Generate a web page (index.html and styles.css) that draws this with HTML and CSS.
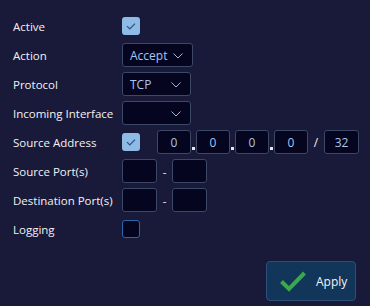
FILE: index.html
```html
<!DOCTYPE html>
<html lang="en">
<head>
  <meta charset="UTF-8">
  <title>Firewall Rule</title>
  <link rel="stylesheet" href="styles.css">
</head>
<body>
  <div class="panel">
    <div class="form">
      <label class="label">Active</label>
      <div class="field"><span class="check on"><svg viewBox="0 0 18 18" width="18" height="18"><path d="M5 9.2 L7.8 12 L13 6.6" fill="none" stroke="#2d4f80" stroke-width="1.2"/></svg></span></div>

      <label class="label">Action</label>
      <div class="field"><div class="select wide"><span>Accept</span><svg class="chev" viewBox="0 0 10 6" width="10" height="6"><path d="M0.5 0.5 L5 5 L9.5 0.5" fill="none" stroke="#9fb8d8" stroke-width="1"/></svg></div></div>

      <label class="label">Protocol</label>
      <div class="field"><div class="select"><span>TCP</span><svg class="chev" viewBox="0 0 10 6" width="10" height="6"><path d="M0.5 0.5 L5 5 L9.5 0.5" fill="none" stroke="#9fb8d8" stroke-width="1"/></svg></div></div>

      <label class="label">Incoming Interface</label>
      <div class="field"><div class="select"><span></span><svg class="chev" viewBox="0 0 10 6" width="10" height="6"><path d="M0.5 0.5 L5 5 L9.5 0.5" fill="none" stroke="#9fb8d8" stroke-width="1"/></svg></div></div>

      <label class="label">Source Address</label>
      <div class="field">
        <span class="check on"><svg viewBox="0 0 18 18" width="18" height="18"><path d="M5 9.2 L7.8 12 L13 6.6" fill="none" stroke="#2d4f80" stroke-width="1.2"/></svg></span>
        <div class="ip">
          <span class="box">0</span><span class="dot"></span>
          <span class="box">0</span><span class="dot"></span>
          <span class="box">0</span><span class="dot"></span>
          <span class="box">0</span>
          <span class="slash">/</span>
          <span class="box mask">32</span>
        </div>
      </div>

      <label class="label">Source Port(s)</label>
      <div class="field"><span class="box port"></span><span class="dash">-</span><span class="box port"></span></div>

      <label class="label">Destination Port(s)</label>
      <div class="field"><span class="box port"></span><span class="dash">-</span><span class="box port"></span></div>

      <label class="label">Logging</label>
      <div class="field"><span class="check off"></span></div>
    </div>

    <div class="actions">
      <button class="apply">
        <svg viewBox="0 0 28 22" width="28" height="22"><path d="M2.5 11.5 L10 19 L25.5 3" fill="none" stroke="#3aa94b" stroke-width="4"/></svg>
        <span>Apply</span>
      </button>
    </div>
  </div>
</body>
</html>
```

FILE: styles.css
```css
:root {
  --bg: #19193a;
  --input-bg: #05051f;
  --border: #3b4866;
  --text: #f2f2f2;
  --value: #a9c6ec;
  --check: #8dbbe6;
}

html, body {
  margin: 0;
  background: var(--bg);
}

body {
  font-family: 'Open Sans', 'Noto Sans', sans-serif;
  font-size: 11.5px;
  color: var(--text);
}

.panel {
  width: 370px;
  height: 306px;
  padding: 14px 14px 0 13px;
  box-sizing: border-box;
}

.form {
  display: grid;
  grid-template-columns: 109px auto;
  grid-auto-rows: 24px;
  row-gap: 5px;
}

.label {
  display: flex;
  align-items: center;
  white-space: nowrap;
}

.field {
  display: flex;
  align-items: center;
}

.check {
  width: 18px;
  height: 18px;
  box-sizing: border-box;
  border-radius: 3px;
  display: inline-flex;
}

.check.on {
  background: var(--check);
}

.check.off {
  background: var(--input-bg);
  border: 1px solid #2a68ad;
}

.select {
  width: 69px;
  height: 24px;
  box-sizing: border-box;
  border: 1px solid var(--border);
  border-radius: 3px;
  background: var(--input-bg);
  color: var(--value);
  display: flex;
  align-items: center;
  padding: 0 9px 0 7px;
  font-size: 12px;
}

.select.wide {
  width: 71px;
}

.select span {
  flex: 1;
}

.chev {
  margin-top: 1px;
}

.ip {
  display: flex;
  align-items: center;
  margin-left: 17px;
}

.box {
  width: 34px;
  height: 24px;
  box-sizing: border-box;
  border: 1px solid var(--border);
  border-radius: 3px;
  background: var(--input-bg);
  color: var(--value);
  display: inline-flex;
  align-items: center;
  justify-content: center;
  font-size: 12px;
}

.box.mask {
  width: 35px;
}

.box.port {
  width: 35px;
}

.dot {
  width: 3px;
  height: 3px;
  background: #e8e8e8;
  margin: 12px 1px 0 1px;
}

.slash {
  width: 16px;
  text-align: center;
  color: var(--text);
  font-size: 12px;
}

.dash {
  width: 15px;
  text-align: center;
}

.actions {
  display: flex;
  justify-content: flex-end;
  margin-top: 20px;
}

.apply {
  width: 90px;
  height: 40px;
  box-sizing: border-box;
  background: #12355a;
  border: 1px solid #2b4f78;
  border-radius: 4px;
  color: #f4f4f4;
  font-family: 'Open Sans', 'Noto Sans', sans-serif;
  font-size: 12px;
  display: flex;
  align-items: center;
  gap: 9px;
  padding: 0 0 0 12px;
  cursor: pointer;
}
```
